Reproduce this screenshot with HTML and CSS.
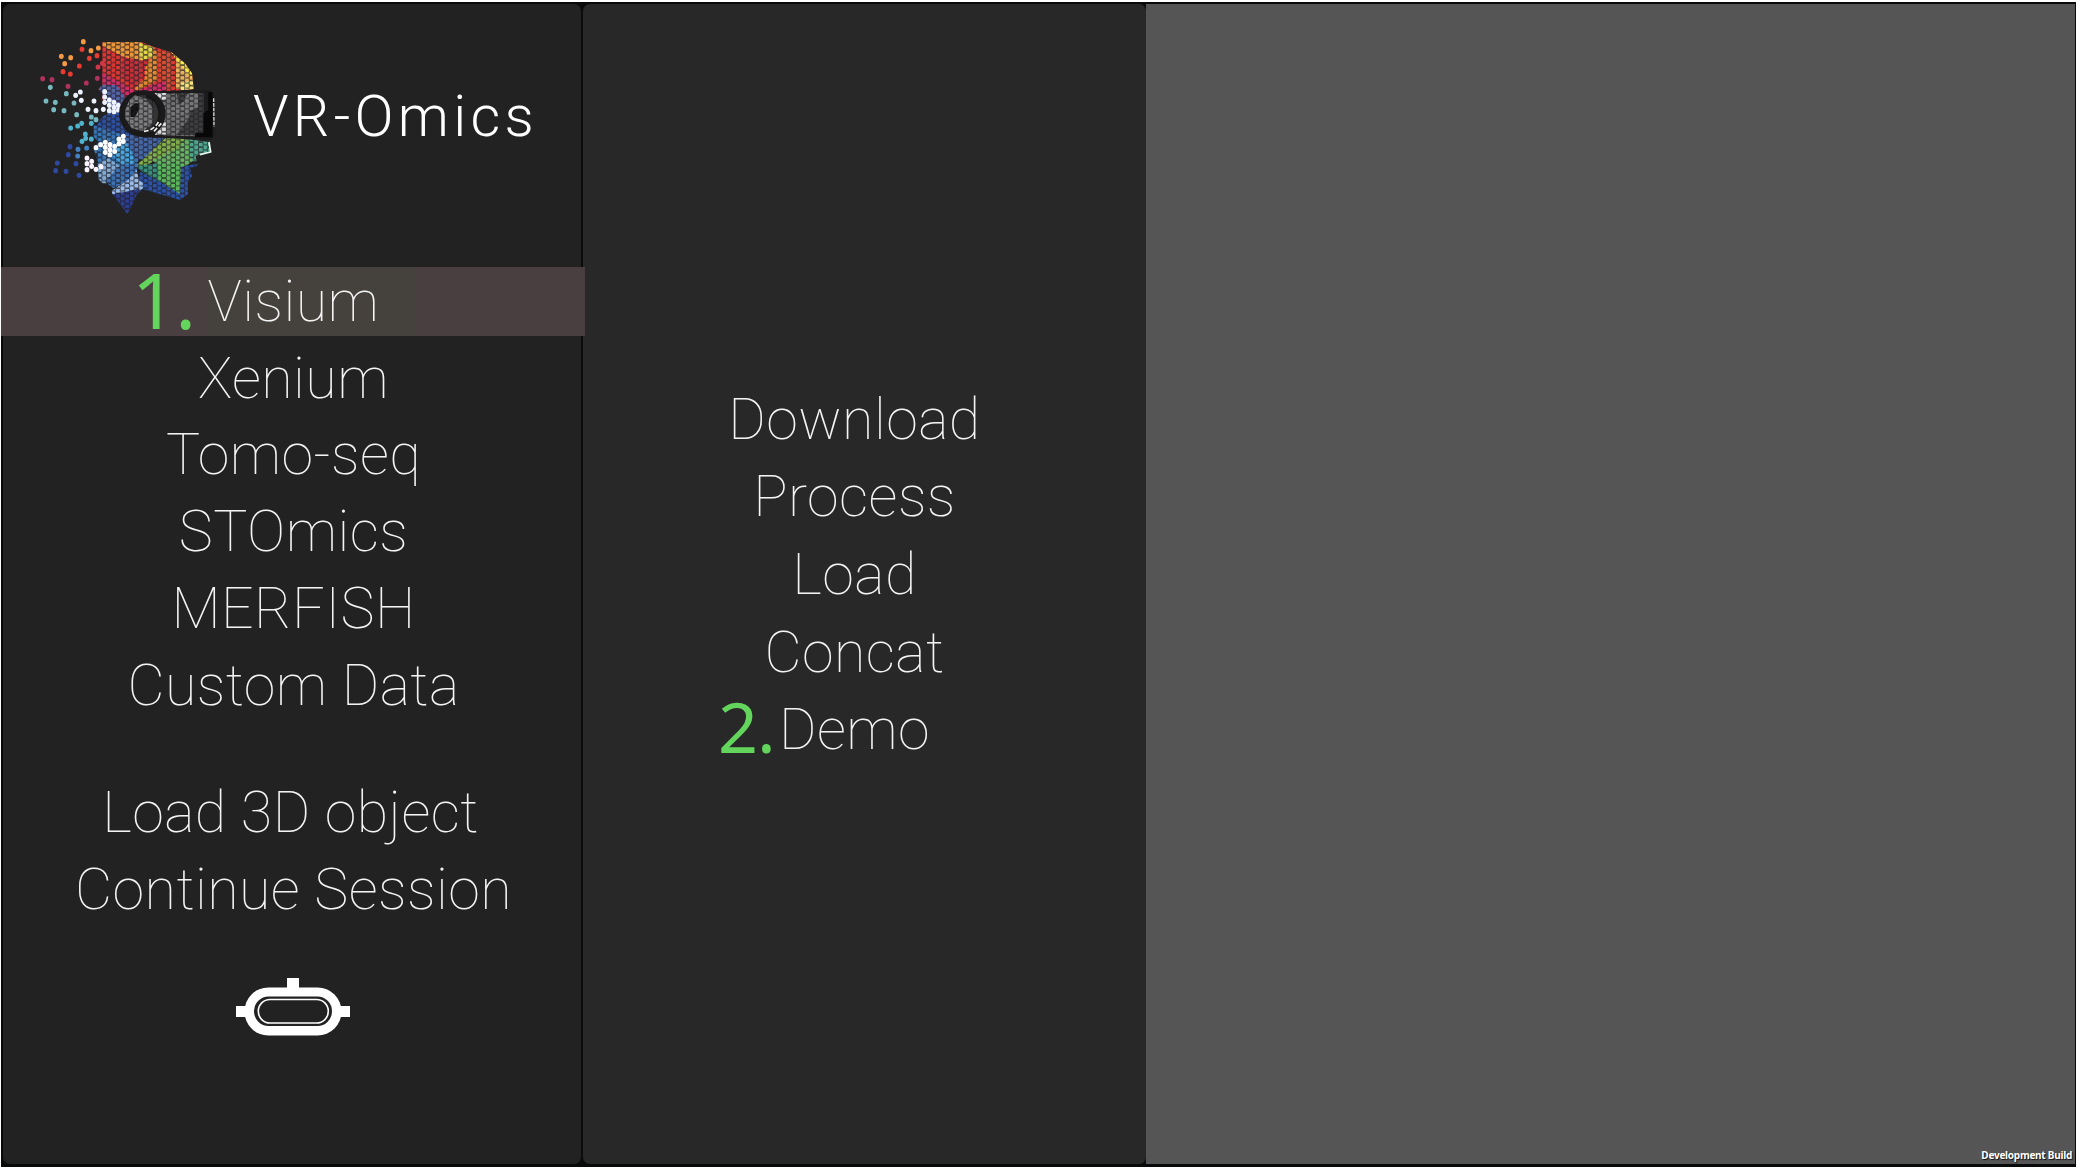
FILE: index.html
```html
<!DOCTYPE html>
<html lang="en">
<head>
<meta charset="utf-8">
<title>VR-Omics</title>
<link rel="stylesheet" href="styles.css">
</head>
<body>
<div class="app">
  <aside class="panel sidebar">
    <header class="brand">
      <svg class="logo" viewBox="0 0 630 630" aria-hidden="true">
        <defs>
          <pattern id="cells" x="247" y="66" width="27.6" height="15.4" patternUnits="userSpaceOnUse">
            <path d="M0 0H11L13.8 7.700H24.800L27.6 0M0 15.400H11L13.8 7.700H24.800L27.6 15.400" fill="none" stroke="#201d25" stroke-width="2.300"/>
          </pattern>
          <path id="head" d="M247 66H365L400 80L455 97L495 130L516 160L521 207L440 215L440 350L567 366L572 396L526 407L534 437L510 445L516 470L503 485L504 522L480 540L368 507L350 525L322 583L276 520L236 478L235 450H195V408H210V430H235L222 390L235 365L221 350V318L247 290L262 275L245 255L247 218L235 208L247 196Z"/>
          <clipPath id="head-clip"><use href="#head"/></clipPath>
        </defs>
        <g clip-path="url(#head-clip)">
          <path fill="#da3733" d="M190 60H530V240H190Z"/>
          <path fill="#eb9637" d="M247 60H365V124L310 110L247 78Z"/>
          <path fill="#e2d34b" d="M358 68L400 80V112L362 124Z"/>
          <path fill="#e28930" d="M400 80L413 100V180L350 214L345 205L375 175V130L400 112Z"/>
          <path fill="#c33138" d="M310 112L385 124L360 180L340 205L300 165Z"/>
          <path fill="#d74f32" d="M412 90L457 98V207H425Z"/>
          <path fill="#ce2d65" d="M240 155L305 190L345 214L435 183V230H300L245 190Z"/>
          <path fill="#f5ea49" d="M453 95L495 130L518 160V185L480 150L466 115Z"/>
          <path fill="#e9b15a" d="M466 115L516 175V190L482 207H467Z"/>
          <path fill="#f4e47b" d="M482 190L525 178V210H482Z"/>
          <path fill="#5363a4" d="M230 195H290L320 240V285L260 250Z"/>
          <path fill="#2d4f9e" d="M247 290L275 273L320 285L360 340L300 350L220 330Z"/>
          <path fill="#3875b5" d="M220 315L310 345L360 390L350 460H220Z"/>
          <path fill="#48a4dc" d="M290 360L325 368L350 440L320 445L280 410Z"/>
          <path fill="#4467a8" d="M315 345H440L370 420L348 415L320 370Z"/>
          <path fill="#80ae4b" d="M350 435L440 350H500L475 385L370 440Z"/>
          <path fill="#67b363" d="M400 420L475 385L500 350H535V410L490 445L480 525L420 460Z"/>
          <path fill="#4ea58c" d="M510 355H580V410L520 425L508 400Z"/>
          <path fill="#36927b" d="M347 438L415 430L420 485L370 458Z"/>
          <path fill="#5ab75b" d="M415 432L490 430L482 525L415 480Z"/>
          <path fill="#2c52a4" d="M360 455L420 485L480 522L484 440L540 430V550H350Z"/>
          <path fill="#82abd4" d="M235 430L265 415L302 440L260 490H230Z"/>
          <path fill="#3c71b4" d="M300 435L350 430V470L280 505L255 485Z"/>
          <path fill="#9abce9" d="M275 512L325 480L350 450L357 480L370 490V505L340 520L277 525Z"/>
          <path fill="#2d3e8e" d="M275 523L325 514L360 505L322 590Z"/>
          <path fill="#222" d="M190 400H232V455H190Z"/>
          <path fill="url(#cells)" d="M190 60H590V590H190Z"/>
        </g>
        <path d="M540 404L572 396L567 366" fill="none" stroke="#e8f7ee" stroke-width="5"/>
        <g id="particles"></g>
        <path fill="#1b1b1c" d="M370 214L570 211Q581 213 582 235L583 335Q582 358 568 359L365 352Z"/>
        <g>
          <path fill="#6e6e6e" d="M400 222L480 220L550 220V350L430 346Z"/>
          <path fill="#3d3d3d" d="M470 219H552V335L525 345H470L510 290V262L480 275Z"/>
          <path fill="#777" d="M505 219H535V262L450 300L440 265L485 250Z"/>
          <path fill="#ddd" d="M403 219H440V237L425 240ZM405 345L438 343V305L425 295Z"/>
          <path fill="url(#cells)" d="M403 217H555V355H403Z"/>
          <path fill="#080808" d="M565 217H577V352H524L527 338H550V280L565 270Z"/>
          <path d="M581 235L582 320" stroke="#d8d8d8" stroke-width="4" stroke-dasharray="11 3"/>
        </g>
        <circle cx="367" cy="281" r="70" fill="#1a1a1b"/>
        <circle cx="369" cy="280" r="54" fill="#333"/>
        <path fill="#7b7b7b" d="M345 226L380 238L398 265V310L370 333L335 325L316 295V270L328 240Z"/>
        <path fill="#111" d="M345 250H358V267L344 291H331V262Z"/>
        <path fill="url(#cells)" d="M316 230H400V333H316Z"/>
        <path d="M378 228A54 54 0 0 1 400 322" fill="none" stroke="#171717" stroke-width="9"/>
        <path d="M372 334Q400 333 417 303M402 334L424 310" fill="none" stroke="#eee" stroke-width="5" stroke-dasharray="14 6"/>
      </svg>
      <h1 class="title">VR-Omics</h1>
    </header>
    <nav class="menu platforms">
      <a class="item active"><span class="step step-one">1.</span><span class="t">Visium</span></a>
      <a class="item"><span class="t">Xenium</span></a>
      <a class="item"><span class="t">Tomo-seq</span></a>
      <a class="item"><span class="t">STOmics</span></a>
      <a class="item"><span class="t">MERFISH</span></a>
      <a class="item"><span class="t">Custom Data</span></a>
    </nav>
    <nav class="menu session">
      <a class="item object"><span class="t">Load 3D object</span></a>
      <a class="item"><span class="t">Continue Session</span></a>
    </nav>
    <svg class="headset" viewBox="0 0 114 58" aria-hidden="true">
      <path fill="#fff" d="M51 0H63V12H51ZM0 28H12V39H0ZM102 28H114V39H102Z"/>
      <rect x="8.5" y="9.5" width="97" height="48" rx="24" fill="#fff"/>
      <rect x="18" y="18.500" width="78" height="29.500" rx="14.700" fill="#222"/>
      <rect x="22.300" y="21.500" width="70" height="23.500" rx="11.700" fill="none" stroke="#fff" stroke-width="1.600"/>
    </svg>
  </aside>
  <section class="panel actions">
    <nav class="menu">
      <a class="item"><span class="t">Download</span></a>
      <a class="item"><span class="t">Process</span></a>
      <a class="item"><span class="t">Load</span></a>
      <a class="item"><span class="t">Concat</span></a>
      <a class="item"><span class="step step-two">2.</span><span class="t">Demo</span></a>
    </nav>
  </section>
  <main class="stage"><p class="build">Development Build</p></main>
</div>
<script src="logo.js"></script>
</body>
</html>
```
FILE: styles.css
```css
body { margin: 0; background: #fff; font-family: Roboto, sans-serif; overflow: hidden; padding-top: 2px; }
.app { box-sizing: border-box; width: 2075px; height: 1165px; margin-left: 1px; border: solid #07090b; border-width: 2px 1px 3px 2px; display: flex; background: #0b0b0b; }
.panel { box-sizing: border-box; border-radius: 7px; }
.sidebar { width: 578px; margin-right: 2px; background: #222; display: flex; flex-direction: column; align-items: center; }
.brand { width: 100%; height: 259.400px; box-sizing: border-box; display: flex; align-items: flex-start; padding: 16px 0 0 17px; }
.logo { width: 210px; height: 210px; flex: none; }
.title { margin: 59px 0 0 23px; font-size: 57.600px; line-height: 75px; font-weight: 300; letter-spacing: 4.300px; color: #fff; white-space: nowrap; }
.menu { width: 100%; display: flex; flex-direction: column; }
.item { box-sizing: border-box; height: 76.750px; display: flex; align-items: center; justify-content: center; position: relative; font-size: 57.300px; line-height: 70px; font-weight: 100; letter-spacing: .45px; color: #f4f4f4; white-space: nowrap; }
.sidebar .item { padding-left: 3px; }
.active::before { content: ""; position: absolute; left: -2px; right: -4px; top: 3.600px; height: 69.500px; background: linear-gradient(90deg, #4a3f40 207px, #45423d 207px 415px, #4a3f40 415px); }
.t { position: relative; }
.session { margin-top: 51px; }
.sidebar .object { padding: 0 3px 0 0; }
.headset { width: 114px; height: 58px; margin: 49.500px 0 0 1px; }
.actions { width: 563px; background: #282828; display: flex; flex-direction: column; padding: 377px 20px 0 0; }
.actions .item { height: 77.600px; }
.step { position: absolute; font-family: "Noto Sans", sans-serif; font-weight: 400; letter-spacing: 0; color: #63d55d; }
.step-one { left: 129px; top: .5px; font-size: 77.500px; letter-spacing: -1px; }
.step-two { left: 135px; top: -.5px; font-size: 70px; letter-spacing: -1px; }
.stage { flex: 1; background: #555; display: flex; align-items: flex-end; justify-content: flex-end; }
.build { margin: 0 3px 2px 0; font: 700 10px/14px "Noto Sans", sans-serif; letter-spacing: -.25px; color: #fff; text-shadow: 1px 1px 1px #111; }
```
FILE: logo.js
```js
// Single cells of the logo, loose or at the back of the head: colour, then x,y pairs.
const particles = {
  "#f29b43": [190,65, 235,84, 213,92, 124,109, 152,113, 134,131],
  "#e83b32": [186,88, 231,107, 208,115, 178,138, 129,155, 151,162],
  "#d23749": [234,141, 247,130],
  "#af315d": [68,176, 96,179, 144,199, 199,189, 232,175],
  "#78b9c0": [91,202, 139,221, 78,243, 106,247, 162,249, 101,269, 132,272, 170,284, 214,291, 228,299],
  "#edf2ff": [181,216, 167,226, 184,241, 222,243, 204,268, 228,272, 250,268, 254,215, 254,231, 254,247, 268,240, 268,256, 282,247, 268,272, 282,262, 282,275, 295,256, 295,270],
  "#50b2cc": [152,324, 173,318, 185,310, 214,310, 196,342, 197,355, 186,364, 214,357],
  "#4480c4": [174,388, 200,384, 173,408],
  "#3049a0": [150,380, 145,404, 112,429, 168,431, 107,452, 138,454, 177,466],
  "#ffffff": [228,383, 242,374, 256,367, 256,382, 256,397, 270,374, 270,389, 270,404, 284,379, 284,394, 297,357, 297,371, 310,349, 310,364],
  "#fbf3ff": [201,414, 201,431, 201,449, 215,424, 215,439, 228,448, 243,440]
};
const layer = document.getElementById("particles");
for (const [fill, points] of Object.entries(particles)) {
  for (let i = 0; i < points.length; i += 2) {
    const dot = document.createElementNS("http://www.w3.org/2000/svg", "ellipse");
    dot.setAttribute("cx", points[i]);
    dot.setAttribute("cy", points[i + 1]);
    dot.setAttribute("rx", 7.2);
    dot.setAttribute("ry", 7.8);
    dot.setAttribute("fill", fill);
    layer.append(dot);
  }
}
```
